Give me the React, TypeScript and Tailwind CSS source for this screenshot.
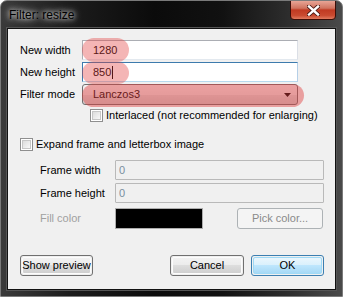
import React from "react";

const font = "font-['Liberation_Sans',Arial,sans-serif]";

function Checkbox() {
  return (
    <div className="w-[13px] h-[13px] border border-[#8f8f8f] bg-white p-[1px] shrink-0">
      <div className="w-full h-full border border-[#c6c6c6] bg-gradient-to-br from-[#dcdcdc] to-[#f8f8f8]" />
    </div>
  );
}

function WinButton({ children, w, primary, disabled }: { children: React.ReactNode; w: string; primary?: boolean; disabled?: boolean }) {
  if (disabled) {
    return (
      <div className={`${w} h-[21px] rounded-[3px] border border-[#adb2b5] bg-[#f4f4f4] flex items-center justify-center text-[#8a8a8a] whitespace-nowrap`}>
        {children}
      </div>
    );
  }
  return (
    <div
      className={`${w} h-[21px] rounded-[3px] border ${primary ? "border-[#3c7fb1]" : "border-[#707070]"} p-[1px]`}
    >
      <div
        className={`w-full h-full rounded-[2px] border ${primary ? "border-[#9fdaf6]" : "border-[#fcfcfc]"} ${
          primary
            ? "bg-[linear-gradient(#eaf6fd_0%,#d9f0fc_50%,#bee6fd_50%,#a7d9f5_100%)]"
            : "bg-[linear-gradient(#f2f2f2_0%,#ebebeb_50%,#dddddd_50%,#cfcfcf_100%)]"
        } flex items-center justify-center text-black whitespace-nowrap`}
      >
        {children}
      </div>
    </div>
  );
}

export default function App() {
  return (
    <div className={`w-[343px] h-[297px] relative ${font} text-[11px] leading-none select-none`}>
      <div className="w-full h-full rounded-t-[7px] border border-[#7a7a7a] bg-[linear-gradient(to_right,#3a3a3a,#1c1c1c_20%,#0b0b0b_45%,#111_65%,#2e2e2e_85%,#4a4a4a)] flex flex-col overflow-hidden">
        {/* Title bar */}
        <div className="h-[27px] shrink-0 flex items-start relative">
          <div className="pl-[8px] pt-[8px] text-[12px] text-black [text-shadow:0_0_5px_#fff,0_0_9px_rgba(255,255,255,0.85)]">
            Filter: resize
          </div>
          <div className="absolute right-[6px] -top-[1px] w-[46px] h-[20px] rounded-b-[4px] border border-[#3a0d07] bg-[linear-gradient(#e8a596_0%,#d0735f_40%,#c13a22_50%,#c94a30_80%,#e17a5e_100%)] flex items-center justify-center">
            <svg width="13" height="11" viewBox="0 0 13 11">
              <path d="M2 1.5 L11 9.5 M11 1.5 L2 9.5" stroke="#4a1a14" strokeWidth="4.2" strokeLinecap="square" />
              <path d="M2 1.5 L11 9.5 M11 1.5 L2 9.5" stroke="#fff" strokeWidth="2.4" strokeLinecap="square" />
            </svg>
          </div>
        </div>
        {/* Client area */}
        <div className="mx-[6px] mb-[6px] flex-1 border border-[#111] outline outline-1 outline-[#555]">
          <div className="w-full h-full bg-[#f0f0f0] relative flex flex-col pt-[11px] pl-[12px] pr-[11px] text-black">
            {/* New width */}
            <div className="flex items-center h-[20px]">
              <div className="w-[62px]">New width</div>
              <div className="w-[216px] h-[20px] border border-[#abadb3] border-r-[#dbdfe6] border-b-[#e3e9ef] bg-white flex items-center pl-[10px]">
                1280
              </div>
            </div>
            <div className="flex items-center h-[20px] mt-[2px]">
              <div className="w-[62px]">New height</div>
              <div className="w-[216px] h-[20px] border border-[#3d7bad] border-r-[#b5cfe7] border-b-[#b7d9ed] bg-white flex items-center pl-[10px]">
                850<span className="inline-block w-px h-[13px] bg-black ml-[1px]" />
              </div>
            </div>
            <div className="flex items-center h-[21px] mt-[2px]">
              <div className="w-[62px]">Filter mode</div>
              <div className="w-[216px] h-[21px] rounded-[3px] border border-[#707070] bg-[linear-gradient(#f2f2f2_0%,#ebebeb_50%,#dddddd_50%,#cfcfcf_100%)] flex items-center pl-[10px] pr-[6px]">
                <span className="flex-1">Lanczos3</span>
                <svg width="7" height="4" viewBox="0 0 7 4">
                  <path d="M0 0 H7 L3.5 4 Z" fill="#000" />
                </svg>
              </div>
            </div>
            <div className="flex items-center h-[13px] mt-[4px] ml-[70px] gap-[3px]">
              <Checkbox />
              <span>Interlaced (not recommended for enlarging)</span>
            </div>
            {/* Expand */}
            <div className="flex items-center h-[13px] mt-[16px] gap-[3px]">
              <Checkbox />
              <span>Expand frame and letterbox image</span>
            </div>
            <div className="flex items-center h-[20px] mt-[9px] pl-[20px]">
              <div className="w-[75px]">Frame width</div>
              <div className="w-[209px] h-[20px] border border-[#b9b9b9] rounded-[1px] bg-[#f0f0f0] flex items-center pl-[3px] text-[#7a8ea0]">
                0
              </div>
            </div>
            <div className="flex items-center h-[20px] mt-[3px] pl-[20px]">
              <div className="w-[75px]">Frame height</div>
              <div className="w-[209px] h-[20px] border border-[#b9b9b9] rounded-[1px] bg-[#f0f0f0] flex items-center pl-[3px] text-[#7a8ea0]">
                0
              </div>
            </div>
            <div className="flex items-center h-[21px] mt-[5px] pl-[20px]">
              <div className="w-[75px] text-[#a0a0a0]">Fill color</div>
              <div className="w-[88px] h-[21px] border border-[#adadad] bg-black" />
              <div className="ml-[34px]">
                <WinButton w="w-[86px]" disabled>
                  Pick color...
                </WinButton>
              </div>
            </div>
            {/* Bottom buttons */}
            <div className="flex items-center mt-[26px]">
              <WinButton w="w-[73px]">Show preview</WinButton>
              <div className="flex-1" />
              <WinButton w="w-[74px]">Cancel</WinButton>
              <div className="w-[7px]" />
              <WinButton w="w-[73px]" primary>
                OK
              </WinButton>
            </div>
            {/* Red annotation highlights */}
            <div className="absolute left-[74px] top-[9px] w-[47px] h-[24px] rounded-full bg-[rgba(225,60,60,0.38)] pointer-events-none" />
            <div className="absolute left-[74px] top-[33px] w-[47px] h-[22px] rounded-full bg-[rgba(225,60,60,0.38)] pointer-events-none" />
            <div className="absolute left-[74px] top-[55px] w-[222px] h-[23px] rounded-full bg-[rgba(225,60,60,0.45)] pointer-events-none" />
          </div>
        </div>
      </div>
    </div>
  );
}
